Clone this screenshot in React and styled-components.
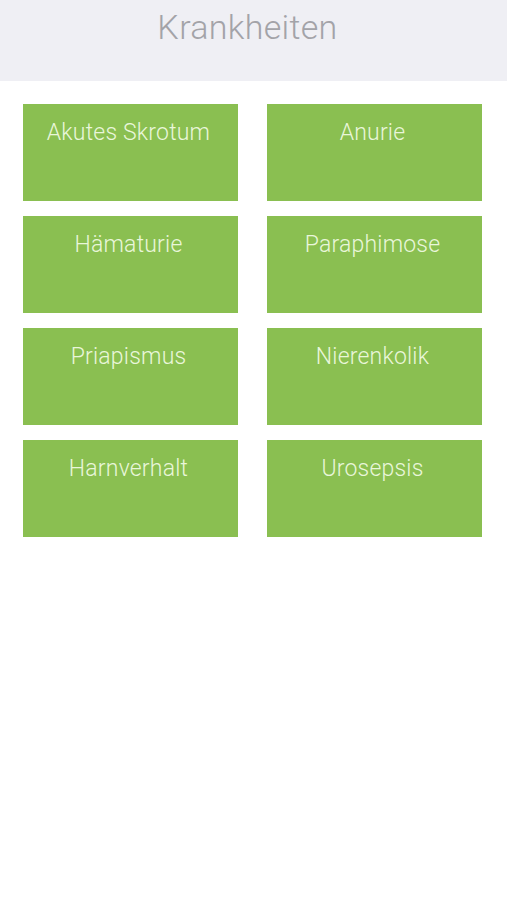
import React from "react";
import styled, { createGlobalStyle } from "styled-components";

const items = [
  "Akutes Skrotum",
  "Anurie",
  "Hämaturie",
  "Paraphimose",
  "Priapismus",
  "Nierenkolik",
  "Harnverhalt",
  "Urosepsis",
];

export default function App() {
  return (
    <>
      <GlobalStyle />
      <Page>
        <Header>
          <Title>Krankheiten</Title>
        </Header>
        <Grid>
          {items.map((name) => (
            <Tile key={name}>{name}</Tile>
          ))}
        </Grid>
      </Page>
    </>
  );
}

// Styles
const GlobalStyle = createGlobalStyle`
  html, body {
    margin: 0;
    padding: 0;
    background: #ffffff;
  }
  body {
    font-family: Roboto, "Liberation Sans", sans-serif;
  }
`;

const Page = styled.div`
  width: 507px;
  min-height: 900px;
  background: #ffffff;
`;

const Header = styled.header`
  height: 81px;
  background: #efeff4;
  display: flex;
  justify-content: center;
  box-sizing: border-box;
  padding-top: 7px;
  padding-right: 12px;
`;

const Title = styled.h1`
  margin: 0;
  font-family: Roboto, "Liberation Sans", sans-serif;
  font-weight: 300;
  font-size: 34px;
  letter-spacing: 0.3px;
  line-height: 40px;
  color: #a3a3a8;
`;

const Grid = styled.div`
  display: grid;
  grid-template-columns: 215px 215px;
  column-gap: 29px;
  row-gap: 15px;
  padding: 23px 0 0 23px;
`;

const Tile = styled.div`
  height: 97px;
  box-sizing: border-box;
  padding: 15px 4px 0 0;
  background: #8abf51;
  color: #e9f6da;
  font-family: Roboto, "Liberation Sans", sans-serif;
  font-weight: 300;
  font-size: 23px;
  letter-spacing: 0.2px;
  line-height: 28px;
  text-align: center;
`;
